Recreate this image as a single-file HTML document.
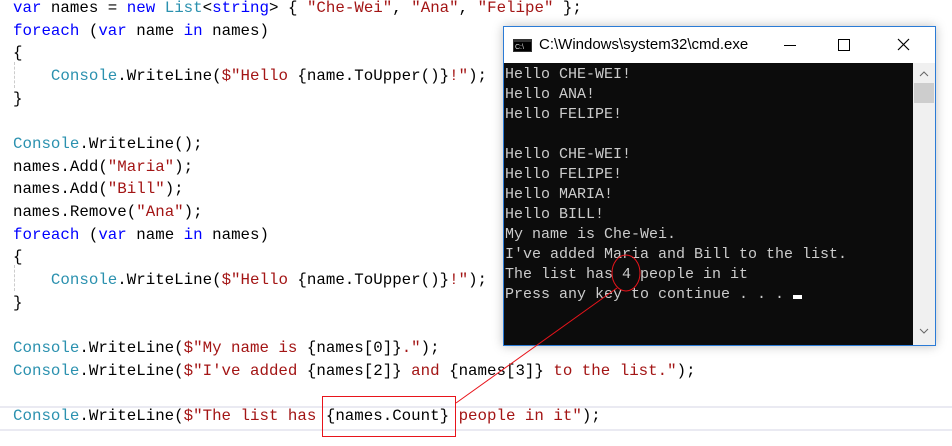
<!DOCTYPE html><html><head><style>
body{margin:0;width:952px;height:446px;background:#fff;position:relative;overflow:hidden;font-family:"Liberation Mono",monospace}
.code{position:absolute;left:13px;top:-3px;font-size:15.8px;line-height:22.65px;white-space:pre;color:#000}
.k{color:#0000ff}.t{color:#2b91af}.s{color:#a31515}
.hl{position:absolute;left:0;width:952px;top:406px;height:21px;border-top:2px solid #eaeaf2;border-bottom:2px solid #eaeaf2}
.win{position:absolute;left:503px;top:26px;width:431px;height:318px;border:1px solid #2b7bd6;background:#fff;box-shadow:0 0 10px rgba(0,0,0,.25)}
.title{height:36px;font-family:"Liberation Sans",sans-serif;font-size:15px;color:#000;position:relative}
.con{position:absolute;left:0;top:36px;width:409px;height:282px;background:#0c0c0c;color:#cccccc;font-size:15px;line-height:20px;white-space:pre;padding:2px 0 0 1px;box-sizing:border-box}
.sb{position:absolute;left:409px;top:36px;width:22px;height:282px;background:#f0f0f0}
</style></head><body>
<div class="hl"></div>
<div class="code"><span class="k">var</span> names = <span class="k">new</span> <span class="t">List</span>&lt;<span class="k">string</span>&gt; { <span class="s">"Che-Wei"</span>, <span class="s">"Ana"</span>, <span class="s">"Felipe"</span> };
<span class="k">foreach</span> (<span class="k">var</span> name <span class="k">in</span> names)
{
    <span class="t">Console</span>.WriteLine(<span class="s">$"Hello </span>{name.ToUpper()}<span class="s">!"</span>);
}

<span class="t">Console</span>.WriteLine();
names.Add(<span class="s">"Maria"</span>);
names.Add(<span class="s">"Bill"</span>);
names.Remove(<span class="s">"Ana"</span>);
<span class="k">foreach</span> (<span class="k">var</span> name <span class="k">in</span> names)
{
    <span class="t">Console</span>.WriteLine(<span class="s">$"Hello </span>{name.ToUpper()}<span class="s">!"</span>);
}

<span class="t">Console</span>.WriteLine(<span class="s">$"My name is </span>{names[0]}<span class="s">."</span>);
<span class="t">Console</span>.WriteLine(<span class="s">$"I've added </span>{names[2]}<span class="s"> and </span>{names[3]}<span class="s"> to the list."</span>);

<span class="t">Console</span>.WriteLine(<span class="s">$"The list has </span>{names.Count}<span class="s"> people in it"</span>);</div>
<div style="position:absolute;left:14px;top:62px;height:26px;border-left:1px dashed #ccc"></div>
<div style="position:absolute;left:14px;top:265px;height:26px;border-left:1px dashed #ccc"></div>
<div class="win">
<div class="title">
<svg style="position:absolute;left:9px;top:12px" width="19" height="13"><rect x="0" y="0" width="19" height="13" fill="#333"/><rect x="1" y="3" width="17" height="9" fill="#000"/><text x="2" y="10" font-size="7" fill="#ddd" font-family="Liberation Sans">C:\</text></svg>
<span style="position:absolute;left:35px;top:9px">C:\Windows\system32\cmd.exe</span>
<div style="position:absolute;left:280px;top:18px;width:12px;height:1px;background:#000"></div>
<div style="position:absolute;left:334px;top:12px;width:10px;height:10px;border:1px solid #000"></div>
<svg style="position:absolute;left:393px;top:11px" width="13" height="13"><path d="M1 1L12 12M12 1L1 12" stroke="#000" stroke-width="1.2"/></svg>
</div>
<div class="con">Hello CHE-WEI!
Hello ANA!
Hello FELIPE!

Hello CHE-WEI!
Hello FELIPE!
Hello MARIA!
Hello BILL!
My name is Che-Wei.
I've added Maria and Bill to the list.
The list has 4 people in it
Press any key to continue . . . <span style="display:inline-block;width:9px;height:4px;background:#fff;vertical-align:-1px"></span></div>
<div class="sb">
<svg style="position:absolute;left:6px;top:8px" width="10" height="6"><path d="M1 5L5 1L9 5" stroke="#666" fill="none"/></svg>
<div style="position:absolute;left:1px;top:20px;width:20px;height:20px;background:#cdcdcd"></div>
<svg style="position:absolute;left:6px;top:265px" width="10" height="6"><path d="M1 1L5 5L9 1" stroke="#666" fill="none"/></svg>
</div>
</div>
<svg style="position:absolute;left:0;top:0" width="952" height="446">
<rect x="322.5" y="396.5" width="133" height="40" fill="none" stroke="#e8141b" stroke-width="1"/>
<ellipse cx="626" cy="273" rx="14" ry="18" fill="none" stroke="#e8141b" stroke-width="1"/>
<line x1="456" y1="403" x2="617" y2="288" stroke="#e8141b" stroke-width="1"/>
</svg>
</body></html>
